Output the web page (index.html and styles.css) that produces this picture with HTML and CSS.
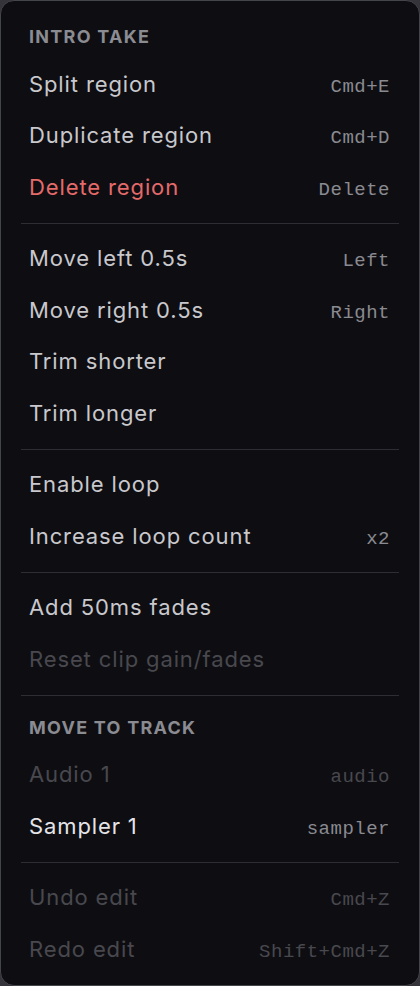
FILE: index.html
```html
<!DOCTYPE html>
<html lang="en">
<head>
  <meta charset="UTF-8" />
  <meta name="viewport" content="width=device-width, initial-scale=1" />
  <title>Region menu</title>
  <link rel="stylesheet" href="styles.css">
</head>
<body>
  <div class="menu">
    <div class="menu-header">Intro take</div>
    <div class="menu-item"><span>Split region</span><span class="shortcut">Cmd+E</span></div>
    <div class="menu-item"><span>Duplicate region</span><span class="shortcut">Cmd+D</span></div>
    <div class="menu-item danger"><span>Delete region</span><span class="shortcut">Delete</span></div>

    <div class="separator"></div>

    <div class="menu-item"><span>Move left 0.5s</span><span class="shortcut">Left</span></div>
    <div class="menu-item"><span>Move right 0.5s</span><span class="shortcut">Right</span></div>
    <div class="menu-item"><span>Trim shorter</span></div>
    <div class="menu-item"><span>Trim longer</span></div>

    <div class="separator"></div>

    <div class="menu-item"><span>Enable loop</span></div>
    <div class="menu-item"><span>Increase loop count</span><span class="shortcut">x2</span></div>

    <div class="separator"></div>

    <div class="menu-item"><span>Add 50ms fades</span></div>
    <div class="menu-item disabled"><span>Reset clip gain/fades</span></div>

    <div class="separator"></div>

    <div class="menu-header">Move to track</div>
    <div class="menu-item disabled"><span>Audio 1</span><span class="shortcut">audio</span></div>
    <div class="menu-item current"><span>Sampler 1</span><span class="shortcut">sampler</span></div>

    <div class="separator"></div>

    <div class="menu-item disabled"><span>Undo edit</span><span class="shortcut">Cmd+Z</span></div>
    <div class="menu-item disabled"><span>Redo edit</span><span class="shortcut">Shift+Cmd+Z</span></div>
  </div>
</body>
</html>
```

FILE: styles.css
```css
body {
  margin: 0;
  background-color: #34343a;
  font-family: Inter, "Noto Sans", sans-serif;
}
.menu {
  box-sizing: border-box;
  width: 420px;
  height: 986px;
  padding: 13.5px 0 11px;
  background-color: #0e0e12;
  border: 1px solid #44444b;
  border-radius: 14px;
}
.menu-header {
  height: 44px;
  display: flex;
  align-items: center;
  padding: 0 28px;
  font-size: 18px;
  font-weight: 700;
  letter-spacing: 0.07em;
  text-transform: uppercase;
  color: #8b8b92;
}
.menu-item {
  height: 51.5px;
  line-height: 51.5px;
  display: flex;
  align-items: baseline;
  justify-content: space-between;
  padding: 0 29px 0 28px;
  font-size: 22px;
  letter-spacing: 0.04em;
  color: #c8c8cd;
}
.shortcut {
  font-family: "Liberation Mono", monospace;
  font-size: 19px;
  letter-spacing: 0.5px;
  color: #8a8a91;
}
.danger {
  color: #e56a6a;
}
.current {
  color: #e4e4e8;
}
.disabled,
.disabled .shortcut {
  color: #48484e;
}
.separator {
  height: 1px;
  margin: 9.5px 20px;
  background-color: #2d2d33;
}
```
